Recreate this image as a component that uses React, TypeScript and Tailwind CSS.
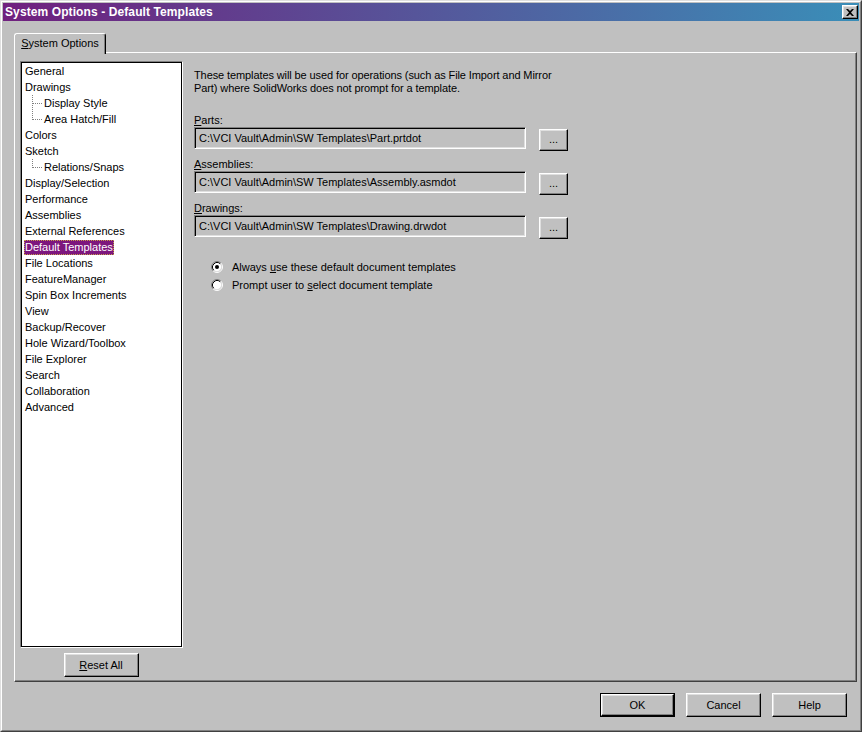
import React from "react";

const raised =
  "border border-t-white border-l-white border-r-black border-b-black shadow-[inset_-1px_-1px_0_#808080,inset_1px_1px_0_#dfdfdf] bg-[#c0c0c0]";
const sunken =
  "border border-t-[#808080] border-l-[#808080] border-r-white border-b-white shadow-[inset_1px_1px_0_#000,inset_-1px_-1px_0_#dfdfdf]";

type Item = { t: string; c?: "mid" | "end"; sel?: boolean };
const items: Item[] = [
  { t: "General" },
  { t: "Drawings" },
  { t: "Display Style", c: "mid" },
  { t: "Area Hatch/Fill", c: "end" },
  { t: "Colors" },
  { t: "Sketch" },
  { t: "Relations/Snaps", c: "end" },
  { t: "Display/Selection" },
  { t: "Performance" },
  { t: "Assemblies" },
  { t: "External References" },
  { t: "Default Templates", sel: true },
  { t: "File Locations" },
  { t: "FeatureManager" },
  { t: "Spin Box Increments" },
  { t: "View" },
  { t: "Backup/Recover" },
  { t: "Hole Wizard/Toolbox" },
  { t: "File Explorer" },
  { t: "Search" },
  { t: "Collaboration" },
  { t: "Advanced" },
];

function Connector({ end }: { end: boolean }) {
  return (
    <svg width="11" height="16" viewBox="0 0 11 16" className="shrink-0">
      <line x1="0.5" y1="0" x2="0.5" y2={end ? 9 : 16} stroke="#808080" strokeDasharray="1 1" />
      <line x1="1" y1="8.5" x2="10" y2="8.5" stroke="#808080" strokeDasharray="1 1" />
    </svg>
  );
}

function Radio({ checked }: { checked: boolean }) {
  return (
    <svg width="12" height="12" viewBox="0 0 12 12" className="shrink-0">
      <circle cx="6" cy="6" r="4.5" fill="#fff" />
      <path d="M 9.89 2.11 A 5.5 5.5 0 0 0 2.11 9.89" fill="none" stroke="#808080" />
      <path d="M 2.11 9.89 A 5.5 5.5 0 0 0 9.89 2.11" fill="none" stroke="#fff" />
      <path d="M 9.18 2.82 A 4.5 4.5 0 0 0 2.82 9.18" fill="none" stroke="#000" />
      <path d="M 2.82 9.18 A 4.5 4.5 0 0 0 9.18 2.82" fill="none" stroke="#dfdfdf" />
      {checked && <circle cx="6" cy="6" r="2" fill="#000" />}
    </svg>
  );
}

function PathField({ u, rest, value }: { u: string; rest: string; value: string }) {
  return (
    <div className="flex flex-col">
      <div className="h-[13px] leading-[13px]">
        <span className="underline underline-offset-1">{u}</span>
        {rest}
      </div>
      <div className="flex">
        <div className={`${sunken} bg-[#c0c0c0] w-[332px] h-[22px] flex items-center pl-[4px] text-black`}>{value}</div>
        <div className="pl-[13px] pt-[2px]">
          <div className={`${raised} w-[29px] h-[22px] flex items-center justify-center pb-[2px]`}>...</div>
        </div>
      </div>
      <div className="h-[7px]" />
    </div>
  );
}

export default function App() {
  return (
    <div className="w-[862px] h-[732px] bg-[#c0c0c0] font-['Liberation_Sans',Arial,sans-serif] text-[11px] leading-[13px] text-black select-none">
      <div className="w-full h-full border border-t-[#dfdfdf] border-l-[#dfdfdf] border-r-[#404040] border-b-[#404040] flex flex-col">
        <div className="flex-1 border border-t-white border-l-white border-r-[#808080] border-b-[#808080] p-[1px] flex flex-col">
          {/* Title bar */}
          <div className="h-[18px] bg-[linear-gradient(to_right,#70207e,#3a8eb8)] flex items-center pl-[2px] pr-[1px]">
            <div className="flex-1 text-white font-bold text-[12px] leading-[14px] tracking-[0.1px]">System Options - Default Templates</div>
            <div className={`${raised} w-[16px] h-[14px] flex items-center justify-center`}>
              <svg width="8" height="7" viewBox="0 0 8 7">
                <path d="M0 0 H2 L4 2 L6 0 H8 L5 3.5 L8 7 H6 L4 5 L2 7 H0 L3 3.5 Z" fill="#000" />
              </svg>
            </div>
          </div>

          {/* Body */}
          <div className="flex-1 flex flex-col pl-[11px] pr-[2px] pt-[12px]">
            {/* Tab strip */}
            <div className="flex h-[20px] relative z-10 -mb-[1px]">
              <div className="w-[92px] h-[21px] bg-[#c0c0c0] border-t border-l border-t-white border-l-white border-r border-r-black rounded-tl-[3px] rounded-tr-[3px] shadow-[inset_-1px_0_0_#808080] flex items-start justify-center pt-[3px]">
                <span>
                  <span className="underline underline-offset-1">S</span>ystem Options
                </span>
              </div>
            </div>
            {/* Panel */}
            <div className="h-[630px] border border-t-white border-l-white border-r-[#404040] border-b-[#404040] shadow-[inset_-1px_-1px_0_#808080] flex">
              {/* Left column */}
              <div className="flex flex-col pl-[5px] pt-[8px]">
                <div className="w-[163px] h-[587px] bg-white border border-t-[#808080] border-l-[#808080] border-r-white border-b-white">
                  <div className="w-full h-full border border-black">
                    {items.map((it) => (
                      <div key={it.t} className={`h-[16px] flex items-center ${it.c ? "pl-[10px]" : "pl-[2px]"}`}>
                        {it.c && <Connector end={it.c === "end"} />}
                        {it.sel ? (
                          <span className="bg-[#7d167d] text-white px-[1px] h-[15px] leading-[15px] outline-1 outline-dotted outline-[#c8a04a] -outline-offset-1">
                            {it.t}
                          </span>
                        ) : (
                          <span className="px-[1px] h-[15px] leading-[15px]">{it.t}</span>
                        )}
                      </div>
                    ))}
                  </div>
                </div>
                <div className="flex justify-center pt-[5px] pr-[1px]">
                  <div className={`${raised} w-[75px] h-[24px] flex items-center justify-center`}>
                    <span>
                      <span className="underline underline-offset-1">R</span>eset All
                    </span>
                  </div>
                </div>
              </div>

              {/* Right column */}
              <div className="flex flex-col pl-[11px] pt-[16px]">
                <p className="h-[26px] tracking-[-0.1px]">
                  These templates will be used for operations (such as File Import and Mirror
                  <br />
                  Part) where SolidWorks does not prompt for a template.
                </p>
                <div className="h-[19px]" />
                <PathField u="P" rest="arts:" value="C:\VCI Vault\Admin\SW Templates\Part.prtdot" />
                <PathField u="A" rest="ssemblies:" value="C:\VCI Vault\Admin\SW Templates\Assembly.asmdot" />
                <PathField u="D" rest="rawings:" value="C:\VCI Vault\Admin\SW Templates\Drawing.drwdot" />
                <div className="flex flex-col pl-[17px] pt-[12px]">
                  <div className="h-[18px] flex items-center gap-[9px]">
                    <Radio checked />
                    <span>
                      Always <span className="underline underline-offset-1">u</span>se these default document templates
                    </span>
                  </div>
                  <div className="h-[18px] flex items-center gap-[9px]">
                    <Radio checked={false} />
                    <span>
                      Prompt user to <span className="underline underline-offset-1">s</span>elect document template
                    </span>
                  </div>
                </div>
              </div>
            </div>

            {/* Bottom buttons */}
            <div className="flex justify-end gap-[11px] pt-[11px] pr-[10px]">
              <div className="w-[75px] h-[24px] border border-black">
                <div className={`${raised} w-full h-full flex items-center justify-center`}>OK</div>
              </div>
              <div className={`${raised} w-[75px] h-[24px] flex items-center justify-center`}>Cancel</div>
              <div className={`${raised} w-[75px] h-[24px] flex items-center justify-center`}>Help</div>
            </div>
          </div>
        </div>
      </div>
    </div>
  );
}
